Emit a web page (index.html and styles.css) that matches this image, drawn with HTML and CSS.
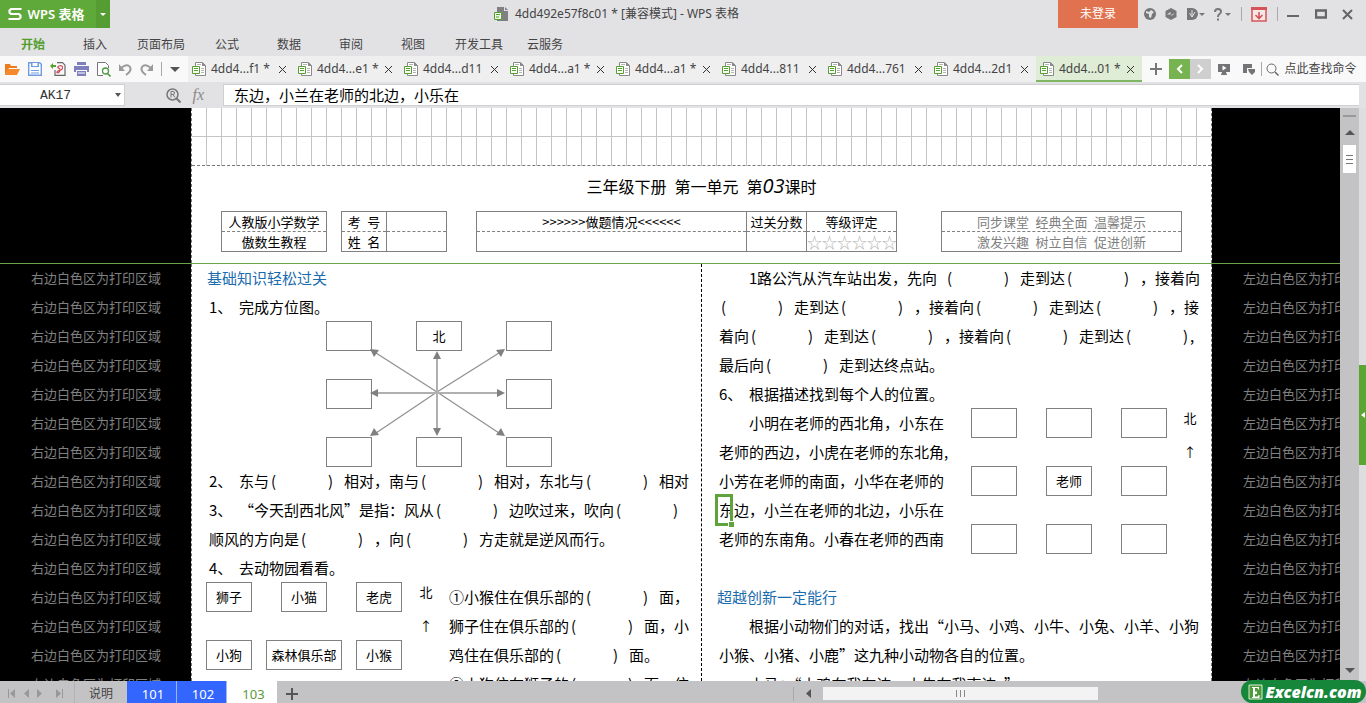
FILE: index.html
```html
<!DOCTYPE html>
<html lang="zh-CN">
<head>
<meta charset="utf-8">
<title>4dd492e57f8c01 * [兼容模式] - WPS 表格</title>
<link rel="stylesheet" href="styles.css">
</head>
<body>
<svg class="defs" aria-hidden="true">
  <symbol id="doc" viewBox="0 0 14 14">
    <path d="M3.5.5h7l3 3v10h-10z" fill="#fff" stroke="#8a8a8a"/>
    <path d="M10 0v4h4z" fill="#8a8a8a"/>
    <path d="M9 6.500h3M9 8.500h3M9 10.500h3M5 2.500h4" stroke="#b5b5b5"/>
    <path d="M.5 4.500h7v7h-7z" fill="#fff" stroke="#55a02f"/>
    <path d="M2 6.500h4M2 8.500h4" stroke="#55a02f"/>
  </symbol>
  <symbol id="x" viewBox="0 0 9 9"><path d="M1 1l7 7M8 1l-7 7" stroke="#333" fill="none"/></symbol>
</svg>
<div class="app">
  <header class="titlebar">
    <button class="brand"><svg width="14" height="14" viewBox="0 0 14 14"><path d="M13.500 2H3L1.500 3.500V5.500L3 7h8l1.500 1.500v2L11 12H.5" fill="none" stroke="#fff" stroke-width="2.200"/></svg><span>WPS 表格</span></button>
    <button class="brand-more" aria-label="菜单"><svg width="6" height="3" viewBox="0 0 6 3"><path d="M0 0h6L3 3z" fill="#fff"/></svg></button>
    <h1 class="doc-title"><svg width="16" height="16" viewBox="0 0 16 16"><path d="M4 1h7v4h4v10H4z" fill="#808083"/><path d="M12 1l3 3h-3z" fill="#808083"/><path d="M1.500 6.500h7v7h-7z" fill="#eef5e9" stroke="#55a02f"/><path d="M3 8.500h4M3 11h3" stroke="#55a02f"/></svg><span>4dd492e57f8c01 * [兼容模式] - WPS 表格</span></h1>
    <button class="login">未登录</button>
    <div class="sys">
      <button aria-label="皮肤"><svg width="12" height="12" viewBox="0 0 12 12"><circle cx="6" cy="6" r="6" fill="#77777a"/><path d="M2 3l3 1 2-2 3 2-2 2-1 4-2-1V6L2 5z" fill="#e2e2e4"/></svg></button>
      <button aria-label="同步"><svg width="12" height="12" viewBox="0 0 12 12"><path d="M6 0l5.500 3v6L6 12 .5 9V3z" fill="#77777a"/><path d="M2 6.500L5.500 4v2.500H7L10 5 6.500 8V6.500" fill="#e2e2e4"/></svg></button>
      <button aria-label="文档"><svg width="18" height="12" viewBox="0 0 18 12"><path d="M0 0h5a6 6 0 010 12H0z" fill="#77777a"/><path d="M5 2v7M2.500 5L5 9l3-5" stroke="#e2e2e4" fill="none"/><path d="M12 5h6l-3 3z" fill="#77777a"/></svg></button>
      <button aria-label="帮助"><svg width="17" height="13" viewBox="0 0 17 13"><path d="M1 4q0-3 3-3t3 2.500Q7 5 5.500 6T4 9M4 10.500v2" fill="none" stroke="#77777a" stroke-width="2"/><path d="M11 5h6l-3 3z" fill="#77777a"/></svg></button>
      <i class="vbar"></i>
      <button aria-label="下载"><svg width="16" height="15" viewBox="0 0 16 15"><path d="M1 1h14v13H1z" fill="#f7e8e8" stroke="#d65457" stroke-width="1.500"/><path d="M0 0h16v3H0z" fill="#d65457"/><path d="M8 5v6M4.500 8L8 11.500 11.500 8" fill="none" stroke="#d65457" stroke-width="1.600"/></svg></button>
      <i class="vbar"></i>
      <button aria-label="最小化"><svg width="12" height="12" viewBox="0 0 12 12"><path d="M0 8h12" stroke="#666" stroke-width="2"/></svg></button>
      <button class="wide" aria-label="最大化"><svg width="12" height="10" viewBox="0 0 12 10"><path d="M1 1.500h10v7H1z" fill="none" stroke="#666" stroke-width="2.400"/></svg></button>
      <button class="wide" aria-label="关闭"><svg width="11" height="11" viewBox="0 0 11 11"><path d="M1 1l9 9M10 1l-9 9" stroke="#666" stroke-width="2"/></svg></button>
    </div>
  </header>
  <nav class="menu">
    <a href="#" class="on">开始</a><a href="#">插入</a><a href="#">页面布局</a><a href="#">公式</a><a href="#">数据</a><a href="#">审阅</a><a href="#">视图</a><a href="#">开发工具</a><a href="#">云服务</a>
  </nav>
  <div class="tabs">
    <div class="quick">
      <button aria-label="打开"><svg width="15" height="12" viewBox="0 0 15 12"><path d="M0 12V1h5l1 2h6v2H4z" fill="#ef7b1c"/><path d="M3 6h12l-3 6H0z" fill="#f58a2c"/></svg></button>
      <button aria-label="保存"><svg width="14" height="14" viewBox="0 0 14 14"><path d="M.7.7h11l1.600 1.600v11H.7z" fill="#fff" stroke="#6f9ce0" stroke-width="1.400"/><path d="M3 0h8v5H3zM3 8h8v1H3zM3 10.500h8v1H3z" fill="#6f9ce0"/><path d="M4.500 1h5v3h-5z" fill="#fff"/></svg></button>
      <button aria-label="输出PDF"><svg width="16" height="14" viewBox="0 0 16 14"><path d="M7 .7h5.500l2.500 2.500v10.100H5V8" fill="none" stroke="#666" stroke-width="1.200"/><path d="M7 11q-1-2 4-3 2-1 1.500-3T9 4t1 3q0 4-3 4" fill="none" stroke="#cf4c5a" stroke-width="1.200"/><path d="M3 1v6L0 4zM3 3h3v2H3z" fill="#55a02f"/></svg></button>
      <button aria-label="打印"><svg width="15" height="14" viewBox="0 0 15 14"><path d="M3 0h9v3H3zM0 4h15v6h-2V8H2v2H0zM3 9h9v5H3z" fill="#7f7fbd"/><path d="M4 11h7" stroke="#fff"/></svg></button>
      <button aria-label="打印预览"><svg width="14" height="15" viewBox="0 0 14 15"><path d="M6 13.500H.5V.5h8l3 3V6" fill="#fff" stroke="#777"/><circle cx="8.500" cy="9" r="3" fill="#fff" stroke="#4f9a45" stroke-width="1.300"/><path d="M10.500 11.500l3 3" stroke="#4f9a45" stroke-width="1.600"/></svg></button>
      <button aria-label="撤销"><svg width="13" height="13" viewBox="0 0 13 13"><path d="M2 5q6-5 9-1 2 4-4 8" fill="none" stroke="#9b9b9d" stroke-width="2"/><path d="M0 1v7h6z" fill="#9b9b9d"/></svg></button>
      <button aria-label="恢复"><svg width="13" height="13" viewBox="0 0 13 13"><path d="M11 5Q5 0 2 4q-2 4 4 8" fill="none" stroke="#9b9b9d" stroke-width="2"/><path d="M13 1v7H7z" fill="#9b9b9d"/></svg></button>
      <i class="vbar"></i>
      <button aria-label="更多"><svg width="10" height="5" viewBox="0 0 10 5"><path d="M0 0h10L5 5z" fill="#555"/></svg></button>
    </div>
    <div class="files">
      <button class="file"><svg class="doc"><use href="#doc"/></svg><span>4dd4...f1 *</span><svg class="x"><use href="#x"/></svg></button>
      <button class="file"><svg class="doc"><use href="#doc"/></svg><span>4dd4...e1 *</span><svg class="x"><use href="#x"/></svg></button>
      <button class="file"><svg class="doc"><use href="#doc"/></svg><span>4dd4...d11</span><svg class="x"><use href="#x"/></svg></button>
      <button class="file"><svg class="doc"><use href="#doc"/></svg><span>4dd4...a1 *</span><svg class="x"><use href="#x"/></svg></button>
      <button class="file"><svg class="doc"><use href="#doc"/></svg><span>4dd4...a1 *</span><svg class="x"><use href="#x"/></svg></button>
      <button class="file"><svg class="doc"><use href="#doc"/></svg><span>4dd4...811</span><svg class="x"><use href="#x"/></svg></button>
      <button class="file"><svg class="doc"><use href="#doc"/></svg><span>4dd4...761</span><svg class="x"><use href="#x"/></svg></button>
      <button class="file"><svg class="doc"><use href="#doc"/></svg><span>4dd4...2d1</span><svg class="x"><use href="#x"/></svg></button>
      <button class="file active"><svg class="doc"><use href="#doc"/></svg><span>4dd4...01 *</span><svg class="x"><use href="#x"/></svg></button>
    </div>
    <div class="tools">
      <button class="add" aria-label="新建"><svg width="12" height="12" viewBox="0 0 12 12"><path d="M6 0v12M0 6h12" stroke="#777" stroke-width="2"/></svg></button>
      <button class="step prev" aria-label="上一个"><svg width="7" height="10" viewBox="0 0 7 10"><path d="M6 1L2 5l4 4" fill="none" stroke="#fff" stroke-width="2"/></svg></button>
      <button class="step next" aria-label="下一个"><svg width="7" height="10" viewBox="0 0 7 10"><path d="M1 1l4 4-4 4" fill="none" stroke="#fff" stroke-width="2"/></svg></button>
      <button class="tool" aria-label="播放"><svg width="12" height="11" viewBox="0 0 12 11"><path d="M0 0h12v8H8l1 3H3l1-3H0z" fill="#747477"/><path d="M4.500 1.500l4 2.500-4 2.500z" fill="#fff"/></svg></button>
      <button class="tool" aria-label="切换"><svg width="12" height="11" viewBox="0 0 12 11"><path d="M0 0h9v4H4v5H0z" fill="#747477"/><path d="M5 5h7v3l-3 3-3-3z" fill="#747477"/></svg></button>
      <i class="vbar"></i>
      <button class="find"><svg width="13" height="13" viewBox="0 0 13 13"><circle cx="5.500" cy="5.500" r="4.500" fill="none" stroke="#666"/><path d="M9 9l3.500 3.500" stroke="#666" stroke-width="1.500"/></svg><span>点此查找命令</span></button>
    </div>
  </div>
  <div class="formula">
    <div class="namebox"><input class="name" value="AK17" aria-label="名称框"><svg width="6" height="4" viewBox="0 0 6 4"><path d="M0 0h6L3 4z" fill="#555"/></svg></div>
    <div class="fx"><svg width="15" height="15" viewBox="0 0 15 15"><circle cx="6.500" cy="6.500" r="5.500" fill="none" stroke="#77777a" stroke-width="1.500"/><path d="M5 9.500v-6h2q1.500 0 1.500 1.500T7 6.500H5M7 6.500l2 3" fill="none" stroke="#77777a"/><path d="M10.500 10.500l4 4" stroke="#77777a" stroke-width="2"/></svg><em>fx</em></div>
    <input class="expr" value="东边，小兰在老师的北边，小乐在" aria-label="编辑栏">
  </div>
  <div class="work">
    <main class="sheet">
      <section class="frozen">
        <div class="side left"></div>
        <div class="page">
          <div class="gridlines"></div>
          <h2 class="lesson">三年级下册&ensp;第一单元&ensp;第<em>03</em>课时</h2>
          <div class="heads">
            <table class="t-book"><tr><td>人教版小学数学</td></tr><tr><td>傲数生教程</td></tr></table>
            <table class="t-id"><tr><td>考&ensp;号</td><td></td></tr><tr><td>姓&ensp;名</td><td></td></tr></table>
            <table class="t-score"><tr><td>&gt;&gt;&gt;&gt;&gt;&gt;做题情况&lt;&lt;&lt;&lt;&lt;&lt;</td><td class="c2">过关分数</td><td class="c3">等级评定</td></tr><tr><td></td><td></td><td class="stars">☆☆☆☆☆☆</td></tr></table>
            <table class="t-tips"><tr><td>同步课堂&ensp;经典全面&ensp;温馨提示</td></tr><tr><td>激发兴趣&ensp;树立自信&ensp;促进创新</td></tr></table>
          </div>
        </div>
        <div class="side right"></div>
      </section>
      <section class="body">
        <div class="side left">
          <p>右边白色区为打印区域</p><p>右边白色区为打印区域</p><p>右边白色区为打印区域</p><p>右边白色区为打印区域</p><p>右边白色区为打印区域</p><p>右边白色区为打印区域</p><p>右边白色区为打印区域</p><p>右边白色区为打印区域</p><p>右边白色区为打印区域</p><p>右边白色区为打印区域</p><p>右边白色区为打印区域</p><p>右边白色区为打印区域</p><p>右边白色区为打印区域</p><p>右边白色区为打印区域</p><p>右边白色区为打印区域</p>
        </div>
        <div class="page cols">
          <div class="col">
            <h3>基础知识轻松过关</h3>
            <p><span class="num">1、</span>完成方位图。</p>
            <div class="compass">
              <div class="boxes wide-gap"><b></b><b>北</b><b></b><b></b><i></i><b></b><b></b><b></b><b></b></div>
              <svg class="rays" width="136" height="90" viewBox="0 0 136 90">
                <g stroke="#929292" fill="none"><path d="M6 4L67 43 129 4M6 84L67 43 129 84" stroke-width="1.300"/><path d="M67 6v76M5 44h126" stroke="#b0b0b0" stroke-width="2"/></g>
                <g fill="#808080"><path d="M0 0l9 1-5 7zM135 0l-9 1 5 7zM0 87l9-1-5-7zM135 87l-9-1 5-7zM67 2l4 8h-8zM67 87l4-8h-8zM0 44l8-4v8zM135 44l-8-4v8z"/></g>
              </svg>
            </div>
            <p><span class="num">2、</span>东与<span class="blank"><i>(</i><i>)</i></span>相对，南与<span class="blank"><i>(</i><i>)</i></span>相对，东北与<span class="blank"><i>(</i><i>)</i></span>相对</p>
            <p><span class="num">3、</span>“今天刮西北风”是指：风从<span class="blank"><i>(</i><i>)</i></span>边吹过来，吹向<span class="blank"><i>(</i><i>)</i></span></p>
            <p>顺风的方向是<span class="blank"><i>(</i><i>)</i></span>，向<span class="blank"><i>(</i><i>)</i></span>方走就是逆风而行。</p>
            <p><span class="num">4、</span>去动物园看看。</p>
            <div class="zoo">
              <div class="boxes"><b>狮子</b><b>小猫</b><b>老虎</b><b>小狗</b><b class="club">森林俱乐部</b><b>小猴</b></div>
              <div class="north"><span>北</span><span>↑</span></div>
              <div class="lines">
                <p>①小猴住在俱乐部的<span class="blank"><i>(</i><i>)</i></span>面，</p>
                <p>狮子住在俱乐部的<span class="blank"><i>(</i><i>)</i></span>面，小</p>
                <p>鸡住在俱乐部的<span class="blank"><i>(</i><i>)</i></span>面。</p>
                <p>②小狗住在狮子的<span class="blank"><i>(</i><i>)</i></span>面，住</p>
              </div>
            </div>
          </div>
          <div class="col second">
            <p class="indent"><span class="one">1</span>路公汽从汽车站出发，先向<span class="blank after"><i>(</i><i>)</i></span>走到达<span class="blank"><i>(</i><i>)</i></span>，接着向</p>
            <p><span class="blank"><i>(</i><i>)</i></span>走到达<span class="blank"><i>(</i><i>)</i></span>，接着向<span class="blank"><i>(</i><i>)</i></span>走到达<span class="blank"><i>(</i><i>)</i></span>，接</p>
            <p>着向<span class="blank"><i>(</i><i>)</i></span>走到达<span class="blank"><i>(</i><i>)</i></span>，接着向<span class="blank"><i>(</i><i>)</i></span>走到达<span class="blank tight"><i>(</i><i>)</i></span>,</p>
            <p>最后向<span class="blank"><i>(</i><i>)</i></span>走到达终点站。</p>
            <p><span class="num">6、</span>根据描述找到每个人的位置。</p>
            <div class="seats">
              <div class="lines">
                <p class="indent">小明在老师的西北角，小东在</p>
                <p>老师的西边，小虎在老师的东北角,</p>
                <p>小芳在老师的南面，小华在老师的</p>
                <p class="picked">东边，小兰在老师的北边，小乐在</p>
                <p>老师的东南角。小春在老师的西南</p>
                <p></p>
              </div>
              <div class="boxes"><b></b><b></b><b></b><b></b><b>老师</b><b></b><b></b><b></b><b></b></div>
              <div class="north"><span>北</span><span>↑</span></div>
            </div>
            <h3>超越创新一定能行</h3>
            <p class="indent">根据小动物们的对话，找出“小马、小鸡、小牛、小兔、小羊、小狗</p>
            <p>小猴、小猪、小鹿”这九种小动物各自的位置。</p>
            <p class="indent">小马：“小鸡在我左边，小牛在我南边。”</p>
          </div>
        </div>
        <div class="side right">
          <p>左边白色区为打印区域</p><p>左边白色区为打印区域</p><p>左边白色区为打印区域</p><p>左边白色区为打印区域</p><p>左边白色区为打印区域</p><p>左边白色区为打印区域</p><p>左边白色区为打印区域</p><p>左边白色区为打印区域</p><p>左边白色区为打印区域</p><p>左边白色区为打印区域</p><p>左边白色区为打印区域</p><p>左边白色区为打印区域</p><p>左边白色区为打印区域</p><p>左边白色区为打印区域</p><p>左边白色区为打印区域</p>
        </div>
      </section>
    </main>
    <div class="vscroll">
      <i class="split"></i>
      <svg width="10" height="5" viewBox="0 0 10 5"><path d="M0 5h10L5 0z" fill="#555"/></svg>
      <div class="vthumb"><i></i><i></i><i></i></div>
      <svg class="down" width="10" height="5" viewBox="0 0 10 5"><path d="M0 0h10L5 5z" fill="#555"/></svg>
    </div>
    <div class="gutter"><button class="pull" aria-label="展开任务窗格"><svg width="4" height="6" viewBox="0 0 4 6"><path d="M4 0v6L0 3z" fill="#fff"/></svg></button></div>
  </div>
  <footer class="bottom">
    <div class="pager">
      <button aria-label="首个"><svg width="8" height="9" viewBox="0 0 8 9"><path d="M0 0h1v9H0zM7 0v9L2 4.500z" fill="#98989b"/></svg></button>
      <button aria-label="上一个"><svg width="5" height="9" viewBox="0 0 5 9"><path d="M5 0v9L0 4.500z" fill="#98989b"/></svg></button>
      <button aria-label="下一个"><svg width="5" height="9" viewBox="0 0 5 9"><path d="M0 0v9l5-4.500z" fill="#98989b"/></svg></button>
      <button class="last" aria-label="末个"><svg width="8" height="9" viewBox="0 0 8 9"><path d="M7 0h1v9H7zM1 0v9l5-4.500z" fill="#98989b"/></svg></button>
    </div>
    <button class="st first">说明</button><button class="st blue">101</button><button class="st blue">102</button><button class="st cur">103</button>
    <button class="plus" aria-label="新建工作表"><svg width="12" height="12" viewBox="0 0 12 12"><path d="M6 0v12M0 6h12" stroke="#555" stroke-width="2"/></svg></button>
    <div class="hscroll">
      <i class="vbar"></i>
      <svg width="5" height="9" viewBox="0 0 5 9"><path d="M5 0v9L0 4.500z" fill="#555"/></svg>
      <div class="hthumb"><i></i><i></i><i></i></div>
    </div>
  </footer>
  <div class="mark"><svg width="15" height="16" viewBox="0 0 15 16"><path d="M1 1h13v14H1z" fill="#4c9a3c" stroke="#d9efcf"/><path d="M4 3h7v2.500h-1L9.500 4H7v3.500h2V10H7v2.500h3l.5-1.500h1v3H4v-1h1V4H4z" fill="#fff"/></svg><span>Excelcn.com</span></div>
</div>
</body>
</html>
```
FILE: styles.css
```css
*, *::before, *::after { box-sizing: border-box; }
body { margin: 0; font: 12px/16px "Noto Sans", "Noto Sans CJK SC", sans-serif; color: #444; }
button { border: 0; padding: 0; margin: 0; background: none; font: inherit; color: inherit; display: flex; align-items: center; justify-content: center; flex: none; }
input { border: 0; padding: 0; background: none; min-width: 0; }
svg { display: block; flex: none; }
p, h1, h2, h3 { margin: 0; font-weight: 400; }
.defs { position: absolute; width: 0; height: 0; }
.app { position: relative; display: flex; flex-direction: column; height: 100vh; background: #e2e2e4; overflow: hidden; }
.vbar { flex: none; width: 1px; height: 14px; background: #a9a9ab; }

.titlebar { display: flex; height: 28px; flex: none; }
.brand { width: 96px; gap: 6px; padding-right: 4px; background: #5fa83a; color: #fff; font-size: 13px; font-weight: 600; }
.brand-more { width: 14px; background: #559c32; }
.doc-title { flex: 1; display: flex; align-items: center; justify-content: center; gap: 6px; padding-left: 64px; font-size: 12px; }
.login { width: 80px; background: #e0724f; color: #fff; }
.sys { width: 228px; display: flex; align-items: center; justify-content: space-between; padding: 0 13px 0 6px; }
.sys .wide { padding-left: 6px; }

.menu { display: flex; flex: none; height: 28px; align-items: center; padding: 6px 2px 0; }
.menu a { min-width: 62px; padding: 0 11px; text-align: center; color: #444; text-decoration: none; }
.menu .on { color: #4f9e2b; font-weight: 700; }

.tabs { display: flex; height: 26px; flex: none; background: #efeff0; }
.quick { width: 188px; display: flex; align-items: center; justify-content: space-between; padding: 0 8px 0 5px; background: #f9f9f9; }
.files { display: flex; }
.file { width: 106px; justify-content: flex-start; gap: 5px; padding-left: 4px; }
.file span { width: 62px; text-align: left; white-space: nowrap; }
.doc { width: 14px; height: 14px; }
.x { width: 9px; height: 9px; }
.file.active { background: #dfecd6; box-shadow: inset 0 -2px #7fb663; }
.tools { flex: 1; display: flex; align-items: center; background: #f9f9f9; padding-right: 7px; }
.add { width: 27px; }
.step { height: 20px; width: 21px; }
.prev { background: #78b352; }
.next { background: #cfcfcf; }
.tool { width: 25px; }
.find { flex: 1; gap: 5px; padding-left: 2px; }

.formula { display: flex; height: 26px; flex: none; padding: 2px 7px 2px 0; }
.namebox { width: 125px; display: flex; align-items: center; background: #fff; border: 1px solid #cfcfd2; border-left: 0; padding-right: 3px; }
.name { flex: 1; text-align: center; padding: 2px 4px 0 0; font: 13px/18px "Liberation Mono", monospace; color: #333; }
.fx { width: 98px; display: flex; align-items: center; justify-content: flex-end; gap: 11px; padding-right: 19px; color: #88888b; }
.fx em { font: italic 16px/20px "Liberation Serif", serif; }
.expr { flex: 1; background: #fff; border: 1px solid #cfcfd2; border-right: 0; padding-left: 10px; font: 15px/20px "Noto Sans CJK SC", sans-serif; color: #000; }

.work { flex: 1; min-height: 0; display: flex; }
.sheet { flex: 1; min-width: 0; display: flex; flex-direction: column; overflow: hidden; background: #000; font-family: "Noto Sans CJK SC", sans-serif; color: #000; }
.frozen { display: flex; flex: none; border-bottom: 1px solid #6aa349; }
.body { display: flex; flex: 1; min-height: 0; }
.side { background: #000; color: #808080; font-size: 13px; line-height: 27px; white-space: nowrap; overflow: hidden; }
.side p { height: 29px; }
.side.left { width: 191px; flex: none; padding-left: 31px; }
.side.right { flex: 1; min-width: 0; padding-left: 31px; }
.page { width: 1021px; flex: none; background: #fff; border: dashed #777; border-width: 0 1px; }
.gridlines { height: 58px; border-bottom: 1px dashed #777; background: linear-gradient(#c4c4c4, #c4c4c4) 0 28px / 100% 1px no-repeat, repeating-linear-gradient(90deg, transparent 0 14px, #c4c4c4 14px 15px); }
.lesson { font-size: 16px; line-height: 41px; height: 45px; text-align: center; }
.lesson em { font: italic 500 20px/32px "Open Sans", sans-serif; }
.heads { display: flex; padding: 0 29px 11px; font-size: 13px; line-height: 18px; white-space: nowrap; }
table { border-collapse: collapse; border: 1px solid #808080; table-layout: fixed; flex: none; }
td { height: 20px; padding: 0; text-align: center; border: 1px solid #808080; }
tr:first-child td { border-bottom: 1px dashed #808080; }
tr + tr td { border-top: 1px dashed #808080; }
.t-book { width: 106px; margin-right: 14px; }
.t-id { width: 106px; margin-right: 29px; }
.t-id td:first-child { width: 45px; }
.t-score { width: 421px; margin-right: 44px; }
.t-score .c2 { width: 60px; }
.t-score .c3 { width: 90px; }
.stars { color: #b5b5b5; font-size: 15px; }
.t-tips { width: 241px; color: #808080; }

.cols { display: flex; overflow: hidden; font-size: 15px; line-height: 27px; }
.col { width: 509px; flex: none; padding-left: 17px; white-space: nowrap; }
.col.second { width: 510px; border-left: 1px dashed #000; }
.col p { height: 29px; }
.col h3 { font-size: 15px; color: #1a6cae; height: 29px; margin-left: -2px; }
.indent { padding-left: 30px; }
.num { display: inline-block; width: 30px; }
.one { display: inline-block; width: 8px; }
.blank { display: inline-flex; width: 75px; justify-content: space-between; padding: 0 11px 0 2px; }
.blank i { font-style: normal; }
.blank.after { margin-left: 8px; }
.blank.tight { width: 66px; padding-right: 2px; }
.boxes { display: grid; grid-template-columns: repeat(3, 46px); grid-auto-rows: 30px; gap: 28px 29px; flex: none; }
.wide-gap { column-gap: 44px; }
.boxes b { display: flex; align-items: center; justify-content: center; border: 1px solid #808080; background: #fff; font-size: 13px; font-weight: 400; line-height: 18px; }
.boxes .club { margin: 0 -15px; }
.compass { position: relative; height: 145px; padding-left: 117px; margin-top: -1px; margin-bottom: 1px; }
.rays { position: absolute; left: 161px; top: 28px; }
.zoo { display: flex; margin-left: -3px; }
.zoo .boxes { margin-top: -1px; align-self: flex-start; }
.north { display: flex; flex-direction: column; width: 14px; font-size: 13px; gap: 16px; line-height: 18px; text-align: center; }
.zoo .north { margin: 0 16px 0 17px; }
.seats { display: flex; }
.seats .lines { width: 252px; }
.seats .boxes { margin-top: -1px; align-self: flex-start; }
.seats .north { margin-left: 16px; }
.picked { position: relative; }
.picked::before { content: ""; position: absolute; left: -4px; top: -2px; width: 18px; height: 32px; border: 3px solid #5fa33c; }
.picked::after { content: ""; position: absolute; left: 9px; top: 25px; width: 6px; height: 6px; background: #5fa33c; border: solid #fff; border-width: 1px 0 0 1px; }

.vscroll { width: 19px; flex: none; background: #c3c3c6; display: flex; flex-direction: column; align-items: center; padding: 7px 0 8px; }
.split { width: 13px; height: 2px; background: #98989b; margin-bottom: 13px; }
.vthumb { width: 13px; height: 28px; margin-top: 10px; background: #fff; display: flex; flex-direction: column; align-items: center; justify-content: center; gap: 3px; }
.vthumb i { width: 7px; height: 1px; background: #777; }
.down { margin-top: auto; }
.gutter { width: 7px; flex: none; background: #dedee1; display: flex; align-items: center; padding-top: 40px; }
.pull { width: 7px; height: 100px; background: #5ba632; }

.bottom { display: flex; height: 22px; flex: none; background: #c3c3c5; align-items: stretch; }
.pager { display: flex; align-items: center; width: 75px; gap: 8px; padding: 3px 0 0 8px; border-right: 1px solid #b2b2b4; }
.pager .last { margin-left: 5px; }
.st { width: 50px; padding: 4px 0 0 3px; font-size: 13px; line-height: 18px; }
.st.first { width: 52px; font-size: 12px; padding-left: 0; }
.blue { background: #3366ff; color: #fff; border-right: 1px solid #9db4f5; }
.cur { background: #fff; color: #5a9a3c; }
.plus { width: 30px; padding-top: 3px; }
.hscroll { flex: 1; display: flex; align-items: center; gap: 12px; padding: 3px 268px 0 0; justify-content: flex-end; }
.hthumb { width: 275px; height: 13px; background: #f3f3f4; display: flex; justify-content: center; align-items: center; gap: 3px; }
.hthumb i { width: 1px; height: 7px; background: #888; }
.mark { position: absolute; right: 0; bottom: 0; width: 125px; height: 23px; border-radius: 12px; background: #16863a; color: #fff; display: flex; align-items: center; justify-content: center; gap: 2px; padding-left: 3px; font: italic 800 16px/22px "Open Sans", sans-serif; }
```
